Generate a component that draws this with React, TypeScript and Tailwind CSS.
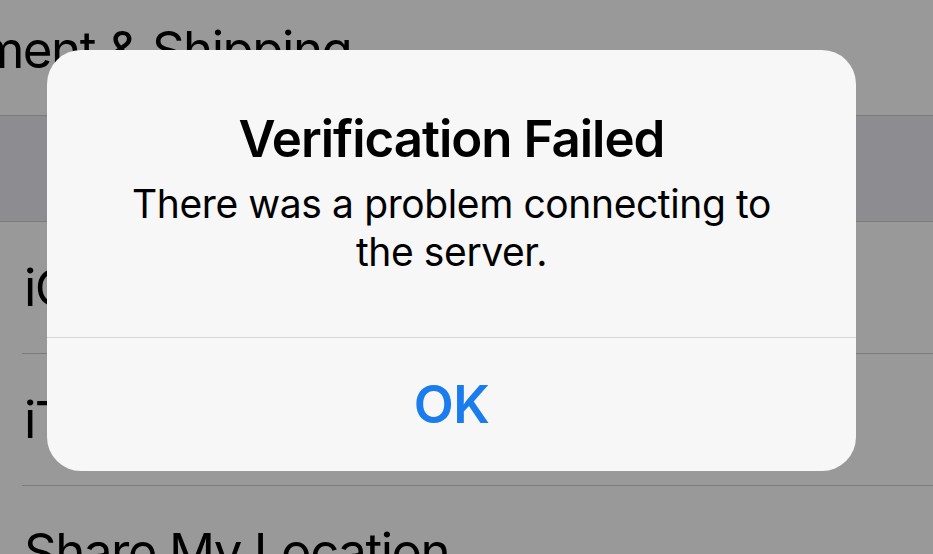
export default function App() {
  const font = { fontFamily: 'Inter, "Noto Sans", sans-serif' };

  return (
    <main className="relative w-[933px] h-[554px] overflow-hidden bg-[#999999]" style={font}>
      {/* Settings list dimmed behind the alert */}
      <div className="flex flex-col">
        <div className="h-[132px] -mt-[16px] flex items-center border-b border-[#7b7b7b] overflow-hidden">
          <span className="ml-[-105px] whitespace-nowrap text-[51px] tracking-[-1.5px] leading-none text-black">Payment &amp; Shipping</span>
        </div>
        <div className="h-[106px] bg-[#8d8d91] border-b border-[#7b7b7b]" />
        {['iCloud', 'iTunes & App Store', 'Share My Location'].map((label) => (
          <div key={label} className="h-[132px] pl-[22px] flex flex-col">
            <div className="flex-1 flex items-center border-b border-[#7b7b7b]">
              <span className="pl-[2px] whitespace-nowrap text-[51px] tracking-[-1.5px] leading-none text-black">{label}</span>
            </div>
          </div>
        ))}
      </div>

      {/* Alert */}
      <div className="absolute left-[47px] top-[50px] w-[809px] h-[421px] rounded-[34px] bg-[#f7f7f7] flex flex-col overflow-hidden">
        <div className="h-[288px] pt-[59px] px-[60px] flex flex-col items-center text-center border-b border-[#d6d6d6]">
          <h1 className="text-[51px] leading-[60px] font-semibold tracking-[-1px] text-black">Verification Failed</h1>
          <p className="mt-[11px] text-[39px] leading-[48px] tracking-[-0.4px] text-black">There was a problem connecting to the server.</p>
        </div>
        <button className="flex-1 flex items-center justify-center text-[52px] font-semibold tracking-[-0.5px] text-[#1b7ded]">OK</button>
      </div>
    </main>
  );
}
